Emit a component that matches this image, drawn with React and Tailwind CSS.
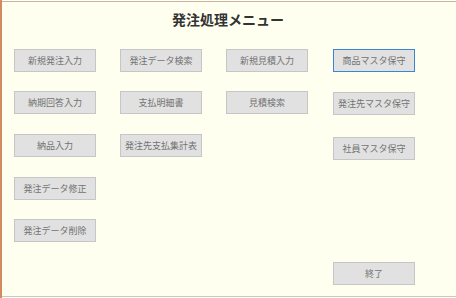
const Btn = ({ label, focus, className = '' }) => (
  <button
    className={
      'w-[82px] h-[23px] shrink-0 bg-[#e1e1e1] text-[9px] leading-none text-[#737373] border ' +
      (focus ? 'border-[#3a86d4] ' : 'border-[#c6c6c6] ') +
      className
    }
  >
    {label}
  </button>
);

const App = () => {
  return (
    <div
      className="w-[456px] h-[298px] bg-[#fffff0] border-l-2 border-[#d38a63] pt-px"
      style={{ fontFamily: '"Noto Sans CJK JP", "Noto Sans", sans-serif' }}
    >
      <div className="h-[296px] border-t border-b border-t-[#c9b3a5] border-b-[#c8c8c8] flex flex-col">
        <h1 className="pt-[10px] h-[24px] text-[14px] leading-[14px] font-bold text-[#333] text-center pr-[2px]">
          発注処理メニュー
        </h1>

        <div className="mt-[23px] pl-[12px] flex">
          <div className="flex flex-col">
            <Btn label="新規発注入力" />
            <Btn label="納期回答入力" className="mt-[19px]" />
            <Btn label="納品入力" className="mt-[20px]" />
            <Btn label="発注データ修正" className="mt-[20px]" />
            <Btn label="発注データ削除" className="mt-[19px]" />
          </div>

          <div className="flex flex-col ml-[24px]">
            <Btn label="発注データ検索" />
            <Btn label="支払明細書" className="mt-[19px]" />
            <Btn label="発注先支払集計表" className="mt-[20px]" />
          </div>

          <div className="flex flex-col ml-[24px]">
            <Btn label="新規見積入力" />
            <Btn label="見積検索" className="mt-[19px]" />
          </div>

          <div className="flex flex-col ml-[25px]">
            <Btn label="商品マスタ保守" focus />
            <Btn label="発注先マスタ保守" className="mt-[20px]" />
            <Btn label="社員マスタ保守" className="mt-[22px]" />
            <Btn label="終了" className="mt-[102px]" />
          </div>
        </div>
      </div>
    </div>
  );
};

export default App;
